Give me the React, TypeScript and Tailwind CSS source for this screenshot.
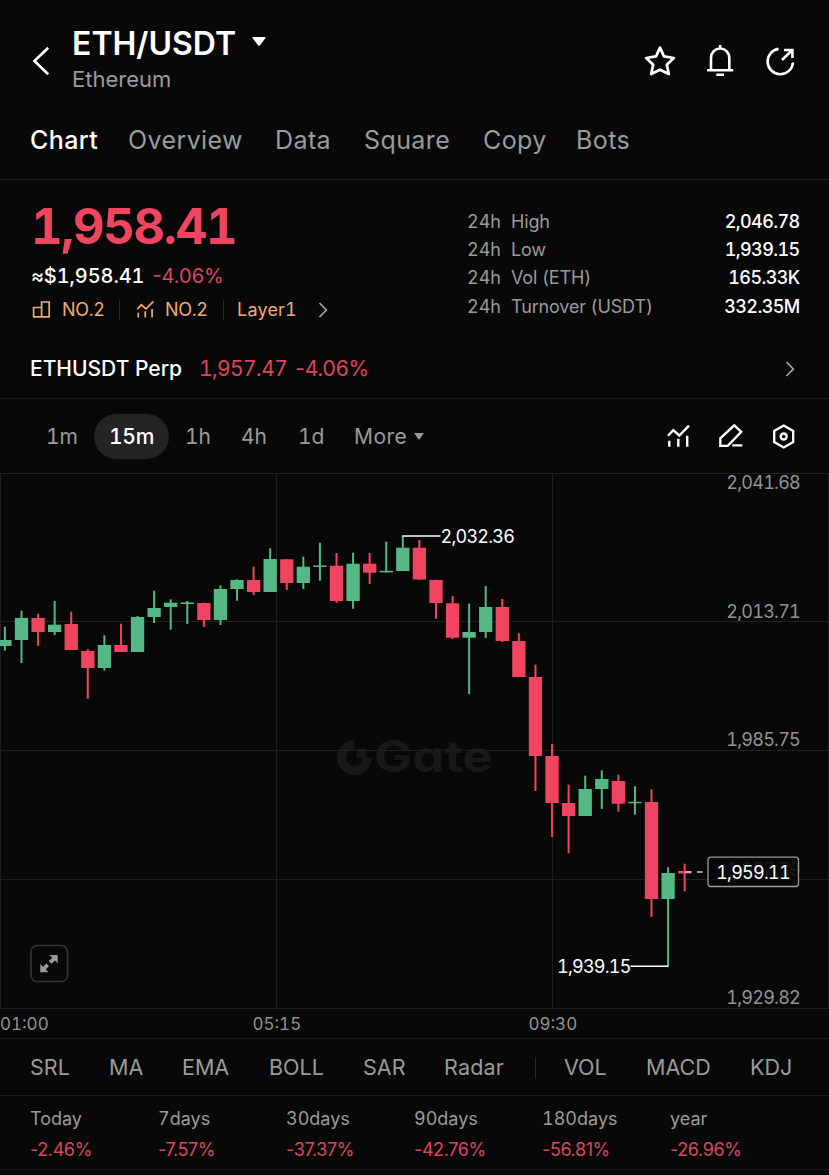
import { ReactNode } from 'react';

const UP = '#55b985';
const DOWN = '#ef4560';

// [open/close top, open/close bottom, high, low] in chart pixels, plus direction
type Candle = [number, number, number, number, 'u' | 'd'];

const candles: Candle[] = [
  [640, 646, 626.7, 650.7, 'u'],
  [618, 640, 610.7, 663, 'u'],
  [618, 632, 613.7, 645.7, 'd'],
  [624.7, 632, 601, 635, 'u'],
  [624, 650, 611.7, 650, 'd'],
  [651, 668, 649.3, 698.7, 'd'],
  [645, 668, 635.3, 670.7, 'u'],
  [645, 652, 623.7, 652, 'd'],
  [617, 652, 616, 652, 'u'],
  [608, 617, 590.7, 623, 'u'],
  [602.7, 607, 599.3, 629.7, 'u'],
  [602.5, 604, 601, 624, 'u'],
  [603, 620, 602.7, 627, 'd'],
  [589, 620, 585.3, 625, 'u'],
  [580, 589, 579.3, 600.7, 'u'],
  [580, 592, 566.7, 595, 'd'],
  [559, 592, 548.3, 592, 'u'],
  [559.3, 583, 559, 590, 'd'],
  [566.7, 583, 556.7, 589, 'u'],
  [565.5, 567, 542.7, 580.7, 'u'],
  [565.7, 601, 553, 603, 'd'],
  [563.7, 601, 552.7, 608.7, 'u'],
  [563.7, 572.7, 553, 584, 'd'],
  [570.8, 572.4, 541.7, 572.4, 'u'],
  [547.7, 571, 535.7, 571, 'u'],
  [547.7, 579.5, 540, 580, 'd'],
  [580, 603, 579.7, 618.7, 'd'],
  [603.3, 637.7, 596, 639, 'd'],
  [632, 637.7, 603.7, 694, 'u'],
  [607, 632, 586, 638, 'u'],
  [607, 641, 599, 642, 'd'],
  [641, 677, 633.3, 677, 'd'],
  [677, 756, 664.7, 791, 'd'],
  [756, 803, 744, 837, 'd'],
  [803, 816, 784.7, 853.3, 'd'],
  [789, 816, 775.7, 816, 'u'],
  [779, 789, 770.3, 809, 'u'],
  [781, 803.7, 774.7, 811.7, 'd'],
  [801.8, 803.3, 786.3, 814.7, 'u'],
  [802, 899, 789.3, 917, 'd'],
  [873, 899, 867.3, 966, 'u'],
  [871, 873.5, 863.7, 891.3, 'd'],
];

const tabs = [
  { label: 'Chart', style: 'w-[98px] font-medium text-white' },
  { label: 'Overview', style: 'w-[147px]' },
  { label: 'Data', style: 'w-[89px]' },
  { label: 'Square', style: 'w-[119px]' },
  { label: 'Copy', style: 'w-[93px]' },
  { label: 'Bots', style: '' },
];

const stats = [
  { label: 'High', value: '2,046.78' },
  { label: 'Low', value: '1,939.15' },
  { label: 'Vol (ETH)', value: '165.33K' },
  { label: 'Turnover (USDT)', value: '332.35M' },
];

const periods = [
  { label: 'Today', value: '-2.46%' },
  { label: '7days', value: '-7.57%' },
  { label: '30days', value: '-37.37%' },
  { label: '90days', value: '-42.76%' },
  { label: '180days', value: '-56.81%' },
  { label: 'year', value: '-26.96%' },
];

function Icon({ size, box, stroke, className, children }: { size: string; box: string; stroke: number; className?: string; children: ReactNode }) {
  return (
    <svg className={`${size} shrink-0 ${className ?? ''}`} viewBox={box} fill="none" stroke="currentColor" strokeWidth={stroke}>
      {children}
    </svg>
  );
}

function TrendIcon({ size, stroke }: { size: string; stroke: number }) {
  return (
    <Icon size={size} box="0 0 26 26" stroke={stroke}>
      <path d="M3 11.8 8.3 6.2l6 5.3L24 1.7M4.3 16.7v6M13.3 14.7v8M22.2 11.7v11" />
    </Icon>
  );
}

function Header() {
  return (
    <header className="flex h-[108px] items-center pl-8 pr-[33.5px] pt-[13px]">
      <Icon size="h-[30px] w-[18px]" box="0 0 18 30" stroke={2.6}>
        <path d="M16.2 1.8 2.4 15l13.8 13.2" />
      </Icon>
      <div className="ml-[22px] flex-1">
        <div className="flex h-9 items-center">
          <h1 className="text-[32px] font-semibold leading-9">ETH/USDT</h1>
          <svg className="-mt-1 ml-4 h-[9px] w-[14px]" viewBox="0 0 14 9">
            <path d="M1 0h12q1.300 0 .5 1L8 8.300q-1 1-2 0L.5 1Q-.3 0 1 0Z" fill="#fff" />
          </svg>
        </div>
        <p className="h-[34px] text-[22px] leading-[34px] text-[#9b9b9b]">Ethereum</p>
      </div>
      <div className="flex gap-7">
        <Icon size="h-8 w-8" box="0 0 32 32" stroke={2.7}>
          <path strokeLinejoin="round" d="m16 2.600 4 8.800 9.800 1.600-7 6.800 2 9.200-8.800-4.300L7.200 29l2-9.200-7-6.800 9.800-1.600Z" />
        </Icon>
        <Icon size="h-8 w-8" box="0 0 32 32" stroke={2.6}>
          <path d="M7 25.200V12.700a9.150 9.150 0 0 1 18.300 0v12.500M3 25.200h26.300M12.300 29.700H20M16.100 0v3.500" />
        </Icon>
        <Icon size="h-8 w-8" box="0 0 32 32" stroke={2.6}>
          <path d="M14.600 3.900A12.700 12.700 0 1 0 29 17.500M18 15 28.300 5M20 5h8.400v8" />
        </Icon>
      </div>
    </header>
  );
}

function Summary() {
  return (
    <section className="flex h-[159px] pl-[31px] pr-[30px] pt-5">
      <div className="flex-1">
        <p className="h-[52px] pt-px text-[49px] font-bold leading-[52px] tracking-[-1.400px] text-[#ef4560]">1,958.41</p>
        <p className="flex h-12 items-center gap-2 text-[20px]">
          <span className="font-medium tracking-[-0.100px]">≈$1,958.41</span>
          <span className="proportional-nums text-[#dc4560]">-4.06%</span>
        </p>
        <div className="flex h-[19px] items-center text-[18px] text-[#f0ac70]">
          <Icon size="h-[19px] w-5" box="0 0 20 19" stroke={1.7}>
            <path d="M2.600 7.500h8v9.400h-8zM10.600 2h7.600v14.900h-7.600z" />
          </Icon>
          <span className="ml-[11px] w-[57px] tracking-[-0.300px]">NO.2</span>
          <span className="h-5 w-px bg-[#2a2a2a]" />
          <span className="ml-[15px] flex w-[30px] items-center">
            <TrendIcon size="h-5 w-5" stroke={2.2} />
          </span>
          <span className="w-[58px] tracking-[-0.300px]">NO.2</span>
          <span className="h-5 w-px bg-[#2a2a2a]" />
          <span className="ml-[13px] w-[81px] tracking-[0.200px]">Layer1</span>
          <Icon size="h-4 w-[10px]" box="0 0 10 16" stroke={1.7} className="text-[#a5a5a5]">
            <path d="m1.500 1 6.800 7-6.800 7" />
          </Icon>
        </div>
      </div>
      <div className="w-[331px] pt-[7px] text-[18px]">
        {stats.map((s) => (
          <div key={s.label} className="flex h-[28.300px] items-center">
            <span className="w-[43px] -translate-x-px text-[#9b9b9b]">24h</span>
            <span className="flex-1 tracking-[-0.150px] text-[#9b9b9b]">{s.label}</span>
            <span className="-mr-[0.6px] font-medium tracking-[-0.600px]">{s.value}</span>
          </div>
        ))}
      </div>
    </section>
  );
}

function Toolbar() {
  return (
    <div className="flex h-[75px] items-center border-t border-[#1c1c1c] pl-[46px] pr-8 text-[21px] text-[#9b9b9b]">
      <span className="w-12 pt-px">1m</span>
      <span className="flex h-[45px] w-[75px] items-center justify-center rounded-full bg-[#242424] pt-px font-medium tracking-[-0.300px] text-white">15m</span>
      <span className="ml-4 w-[56px] pt-px">1h</span>
      <span className="w-[57px] pt-px">4h</span>
      <span className="w-[56px] pt-px">1d</span>
      <span className="pt-px tracking-[0.500px]">More</span>
      <svg className="ml-[7px] h-[7px] w-[10px]" viewBox="0 0 10 7">
        <path d="M0 0h10L5 7Z" fill="#9b9b9b" />
      </svg>
      <div className="ml-auto flex gap-[27px] pt-px text-white">
        <TrendIcon size="h-[26px] w-[26px]" stroke={2.4} />
        <Icon size="h-[26px] w-[26px]" box="0 0 26 26" stroke={2.3}>
          <path d="M2.300 21.800v-7.500l14-13 7 6.500L9.700 21.800ZM14.300 21.300h10" />
        </Icon>
        <Icon size="h-[26px] w-[26px]" box="0 0 26 26" stroke={2.3}>
          <path d="M12.700 1.600 22.200 7v11l-9.500 5.500L3.200 18V7Z" />
          <circle cx="12.700" cy="12.500" r="3" />
        </Icon>
      </div>
    </div>
  );
}

function CandleChart() {
  return (
    <svg className="h-[536px] w-full shrink-0 text-[18px] tracking-[-0.750px]" viewBox="0 473 829 536">
      <g fill="#16181a">
        <path d="M354.500 740a17.500 17.500 0 1 0 17.500 17.500h-9a8.500 8.500 0 1 1-8.500-8.500ZM356.500 748.500h9v9h-9z" />
        <text x="374" y="772" textLength="119" lengthAdjust="spacingAndGlyphs" className="text-[44px] font-bold tracking-normal [font-feature-settings:'cv11']">Gate</text>
      </g>

      <g stroke="#1f1f1f">
        {[473.5, 621.5, 750.5, 879.5, 1008.5].map((y) => (
          <line key={y} x1="0" x2="829" y1={y} y2={y} />
        ))}
        {[0.5, 276.5, 552.5, 828.5].map((x) => (
          <line key={x} x1={x} x2={x} y1="473" y2="1008" />
        ))}
      </g>

      {candles.map(([top, bottom, high, low, dir], i) => {
        const x = 4.9 + i * 16.58;
        return (
          <g key={i} fill={dir === 'u' ? UP : DOWN}>
            <rect x={x - 1} y={high} width="2" height={low - high} />
            <rect x={x - 6.65} y={top} width="13.3" height={bottom - top} />
          </g>
        );
      })}

      {/* High / low markers */}
      <g stroke="#fff" strokeWidth="1.6">
        <path d="M402.500 536h38M630.500 966.300h38" />
      </g>
      <g fill="#fff">
        <text x="440.500" y="543.300">2,032.36</text>
        <text x="557" y="973">1,939.15</text>
      </g>

      <g fill="#939393" textAnchor="end">
        <text x="800" y="488.500">2,041.68</text>
        <text x="800" y="617.500">2,013.71</text>
        <text x="800" y="746">1,985.75</text>
        <text x="800" y="875.500" fillOpacity="0.4">1,957.79</text>
        <text x="800" y="1004">1,929.82</text>
      </g>

      {/* Current price */}
      <path d="M685 872h6.500M697 872h5.500" stroke="#e4c4c8" strokeWidth="1.500" />
      <rect x="708" y="857.200" width="90.500" height="29.300" rx="3" fill="#080808" fillOpacity="0.7" stroke="#9b9b9b" strokeWidth="1.300" />
      <text x="753" y="878.700" fill="#fff" textAnchor="middle">1,959.11</text>

      {/* Fullscreen */}
      <rect x="31" y="945.500" width="36.500" height="36" rx="6" fill="none" stroke="#333" strokeWidth="1.600" />
      <g fill="#9b9b9b">
        <path d="M49.500 955h8.200v8.200l-2.700-2.700-3.500 3.300-2.700-2.700 3.500-3.300ZM40.300 964v8.200h8.200l-2.800-2.700 3.300-3.500-2.600-2.600-3.400 3.400Z" />
      </g>
    </svg>
  );
}

function Indicators() {
  return (
    <div className="flex h-[57px] items-center border-t border-[#1c1c1c] pl-[30px] pt-px text-[21.500px] text-[#9b9b9b]">
      <span className="w-[79px]">SRL</span>
      <span className="w-[73px]">MA</span>
      <span className="w-[87px]">EMA</span>
      <span className="w-[94px]">BOLL</span>
      <span className="w-[81px]">SAR</span>
      <span className="w-[91px] tracking-[0.200px]">Radar</span>
      <span className="h-[22px] w-px bg-[#2a2a2a]" />
      <span className="ml-7 w-[82px]">VOL</span>
      <span className="w-[104px]">MACD</span>
      <span>KDJ</span>
    </div>
  );
}

export default function App() {
  return (
    <div className="flex h-[1175px] w-[829px] flex-col overflow-hidden bg-[#080808] font-['Inter',sans-serif] text-white tabular-nums">
      <Header />

      <nav className="flex h-[71px] items-center pb-[5px] pl-[30px] text-[25px] tracking-[0.400px] text-[#9b9b9b]">
        {tabs.map((tab) => (
          <span key={tab.label} className={tab.style}>{tab.label}</span>
        ))}
      </nav>
      <div className="h-px shrink-0 bg-[#222]" />

      <Summary />

      <div className="flex h-[59px] items-center pl-[30px] pr-[34px] text-[21px]">
        <span className="w-[169px] font-medium">ETHUSDT Perp</span>
        <span className="text-[#dc4560] tracking-[-0.600px]">1,957.47</span>
        <span className="ml-2 text-[#dc4560] tracking-[-0.200px] proportional-nums">-4.06%</span>
        <Icon size="h-4 w-[10px]" box="0 0 10 16" stroke={1.7} className="ml-auto text-[#a5a5a5]">
          <path d="m1.500 1 6.800 7-6.800 7" />
        </Icon>
      </div>

      <Toolbar />
      <CandleChart />

      <div className="flex h-[29px] items-center pt-[3px] text-[17px] text-[#939393]">
        <span className="w-[252.500px]">01:00</span>
        <span className="w-[276px]">05:15</span>
        <span>09:30</span>
      </div>

      <Indicators />

      <div className="grid h-[75px] grid-cols-[repeat(6,128px)] border-y border-[#1c1c1c] pl-[30px] pt-[7px]">
        {periods.map((p) => (
          <div key={p.label} className="text-[18px] leading-[31px]">
            <p className="text-[#9b9b9b]">{p.label}</p>
            <p className="text-[#dc4560] tracking-[-0.400px] proportional-nums">{p.value}</p>
          </div>
        ))}
      </div>
    </div>
  );
}
